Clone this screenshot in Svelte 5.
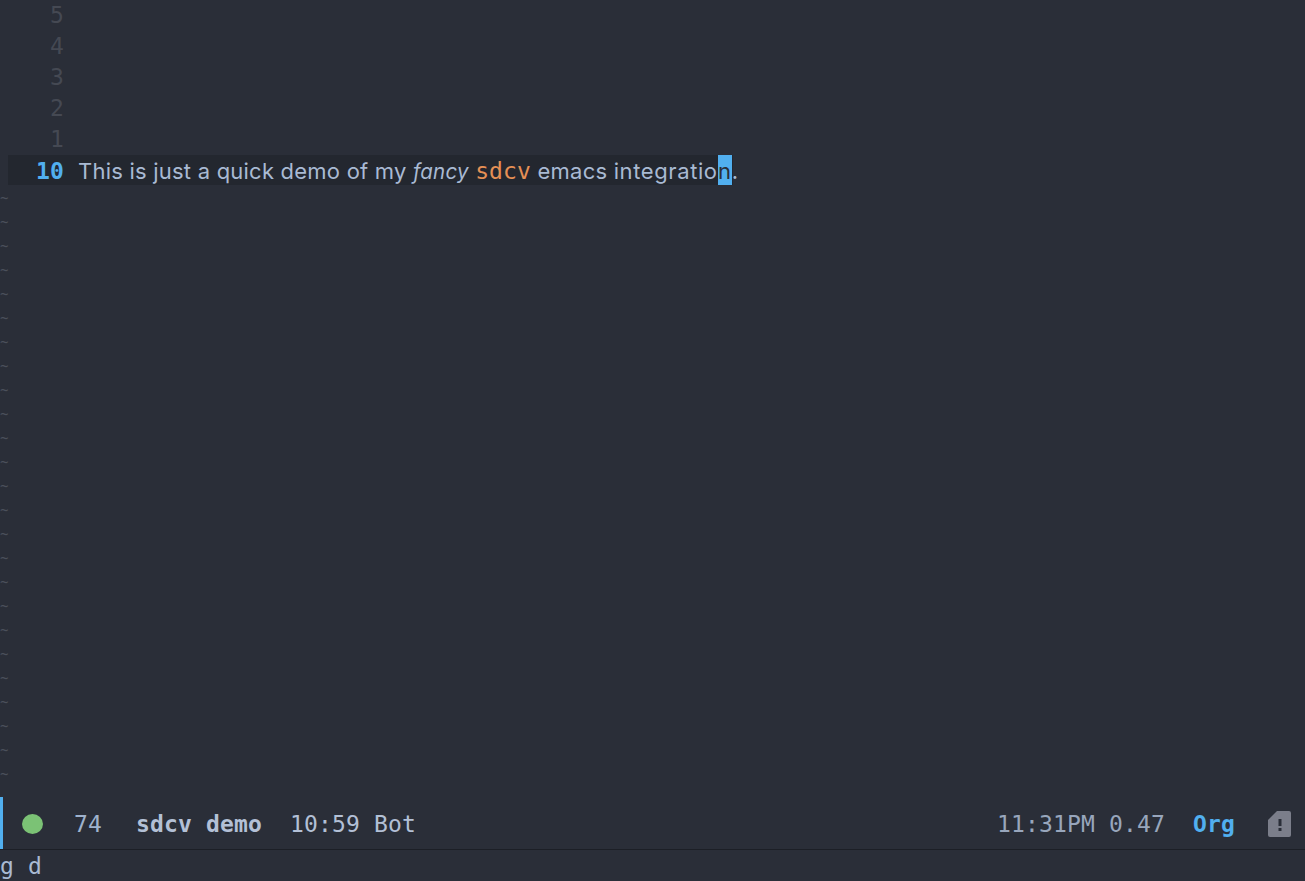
<script>
  const gutter = ['5', '4', '3', '2', '1'];
  const tildes = Array.from({ length: 25 });
</script>

<div class="frame">
  <main class="buffer">
    <div class="relative-lines">
      {#each gutter as n}
        <div class="line"><span class="num">{n}</span></div>
      {/each}
    </div>
    <div class="current">
      <span class="num cur">10</span>
      <span class="text">This is just a quick demo of my <em>fancy</em> <span class="code">sdcv</span> emacs <span class="wide">integratio</span><span class="cursor">n</span>.</span>
    </div>
    <div class="tildes">
      {#each tildes as _}
        <div class="tilde">~</div>
      {/each}
    </div>
  </main>
  <footer class="modeline">
    <span class="dot"></span>
    <span class="ml count">74</span>
    <span class="ml name">sdcv demo</span>
    <span class="ml pos">10:59 Bot</span>
    <span class="spacer"></span>
    <span class="ml time">11:31PM 0.47</span>
    <span class="ml mode">Org</span>
    <svg class="sim" width="23" height="26" viewBox="0 0 23 26" aria-hidden="true">
      <path d="M9 0H21a2 2 0 0 1 2 2V24a2 2 0 0 1-2 2H2a2 2 0 0 1-2-2V9Z" fill="#7b7e8a" />
      <rect x="10.5" y="8" width="3" height="7" fill="#2a2e38" />
      <rect x="10.5" y="17" width="3" height="3" fill="#2a2e38" />
    </svg>
  </footer>
  <div class="echo">g d</div>
</div>

<style>
  :global(body) {
    margin: 0;
    background: #2a2e38;
  }
  .frame {
    width: 1305px;
    height: 881px;
    display: flex;
    flex-direction: column;
    overflow: hidden;
    background: #2a2e38;
    color: #b3c0d6;
    font-family: "DejaVu Sans Mono", monospace;
  }
  .buffer {
    flex: 1;
    min-height: 0;
    display: flex;
    flex-direction: column;
  }
  .relative-lines {
    padding-left: 8px;
  }
  .line {
    height: 31px;
    display: flex;
    align-items: flex-start;
  }
  .num {
    width: 56px;
    line-height: 30px;
    text-align: right;
    font-size: 23px;
    letter-spacing: 0.15px;
    color: #454953;
    flex: none;
  }
  .current {
    height: 30px;
    margin-left: 8px;
    width: 725px;
    display: flex;
    align-items: flex-start;
    background: #23272f;
    white-space: nowrap;
  }
  .cur {
    color: #51afef;
    font-weight: 700;
    line-height: 32px;
  }
  .text {
    margin-left: 14px;
    font-family: Inter, sans-serif;
    font-size: 22px;
    line-height: 32px;
    letter-spacing: 0.22px;
    color: #a9bad3;
  }
  em {
    font-style: italic;
    font-size: 20.5px;
  }
  .wide {
    letter-spacing: 0.6px;
  }
  .code {
    color: #e69055;
    font-family: "DejaVu Sans Mono", monospace;
    font-size: 23px;
    letter-spacing: 0.15px;
  }
  .cursor {
    background: #51afef;
    color: #2a2e38;
    display: inline-block;
    width: 14px;
    text-align: center;
    height: 30px;
    line-height: 32px;
    vertical-align: top;
  }
  .tildes {
    margin-top: 1px;
  }
  .tilde {
    height: 24px;
    line-height: 24px;
    font-size: 14px;
    width: 8px;
    color: #4b505b;
  }
  .modeline {
    height: 52px;
    flex: none;
    display: flex;
    align-items: center;
    box-sizing: border-box;
    border-left: 3px solid #51afef;
    padding-top: 1px;
    padding-right: 14px;
    font-size: 23px;
    letter-spacing: 0.15px;
  }
  .dot {
    width: 21px;
    height: 20px;
    border-radius: 50%;
    background: #7bc275;
    margin-left: 19px;
  }
  .ml {
    white-space: pre;
  }
  .count {
    margin-left: 31px;
    color: #9fb2cd;
  }
  .name {
    margin-left: 34px;
    font-weight: 700;
    color: #b3c0d6;
  }
  .pos {
    margin-left: 28px;
    color: #b3c0d6;
  }
  .spacer {
    flex: 1;
  }
  .time {
    color: #98a6bc;
  }
  .mode {
    margin-left: 28px;
    color: #51afef;
    font-weight: 700;
  }
  .sim {
    margin-left: 33px;
  }
  .echo {
    height: 32px;
    flex: none;
    box-sizing: border-box;
    border-top: 1px solid #1c1f26;
    font-size: 23px;
    line-height: 32px;
    letter-spacing: 0.15px;
    color: #a9bad3;
    white-space: pre;
  }
</style>
